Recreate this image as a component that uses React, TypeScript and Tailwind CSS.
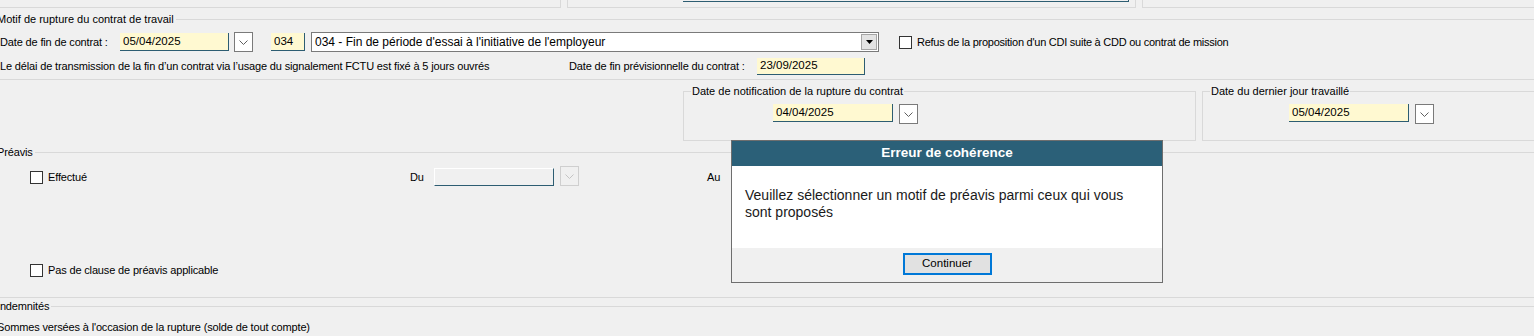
import React from "react";

const Chevron = ({ color = "#5f5f5f" }: { color?: string }) => (
  <svg width="9" height="5" viewBox="0 0 9 5">
    <polyline points="0.5,0.5 4.5,4.5 8.5,0.5" fill="none" stroke={color} strokeWidth="1" />
  </svg>
);

const DateBtn = ({ disabled = false }: { disabled?: boolean }) => (
  <div
    className={
      disabled
        ? "w-[19px] h-[20px] border border-[#cfcfcf] bg-[#f0f0f0] flex items-center justify-center shrink-0"
        : "w-[19px] h-[20px] border border-[#7a7a7a] bg-white flex items-center justify-center shrink-0"
    }
  >
    <Chevron color={disabled ? "#c4c4c4" : "#5f5f5f"} />
  </div>
);

const YInput = ({ w, value }: { w: string; value: string }) => (
  <div className={`${w} h-[18px] shrink-0 bg-[#fff9d1] border-b border-r border-[#2d5d72] flex items-center pl-[3px] text-[11.5px] tracking-normal text-black`}>
    {value}
  </div>
);

const Check = () => <div className="w-[13px] h-[13px] border border-[#333] bg-white shrink-0" />;

const LegendLine = ({ text, className = "" }: { text: string; className?: string }) => (
  <div className={`flex items-center h-[12px] ${className}`}>
    <span className="ml-[-3px] pr-[2px] leading-[12px] whitespace-nowrap">{text}</span>
    <div className="flex-1 h-px bg-[#d9d9d9]" />
  </div>
);

export default function App() {
  return (
    <div
      className="relative w-[1534px] h-[336px] overflow-hidden bg-[#f0f0f0] text-[11px] tracking-[-0.15px] text-black whitespace-nowrap"
      style={{ fontFamily: '"Liberation Sans", Arial, sans-serif' }}
    >
      {/* Top cut-off boxes */}
      <div className="flex h-[8px] gap-[6px]">
        <div className="w-[561px] shrink-0 border-b border-r border-[#d9d9d9]" />
        <div className="w-[569px] shrink-0 border-b border-x border-[#d9d9d9] pl-[115px]">
          <div className="w-[446px] h-[2px] border-b border-r border-[#2d5d72]" />
        </div>
        <div className="flex-1 border-b border-l border-[#d9d9d9]" />
      </div>

      {/* Motif de rupture */}
      <LegendLine text="Motif de rupture du contrat de travail" className="mt-[5px] tracking-normal" />
      <div className="flex items-center h-[24px] mt-[5px]">
        <span className="w-[120px] shrink-0">Date de fin de contrat :</span>
        <YInput w="w-[109px]" value="05/04/2025" />
        <div className="ml-[5px]">
          <DateBtn />
        </div>
        <div className="ml-[18px]">
          <YInput w="w-[34px]" value="034" />
        </div>
        <div className="ml-[6px] w-[568px] shrink-0 h-[20px] border border-[#7a7a7a] bg-white flex items-center">
          <span className="flex-1 pl-[3px] text-[12px] tracking-normal">034 - Fin de période d'essai à l'initiative de l'employeur</span>
          <div className="w-[16px] h-[16px] mr-[1px] bg-[#e3e3e3] border border-[#a5a5a5] flex items-center justify-center">
            <svg width="7" height="4" viewBox="0 0 7 4">
              <polygon points="0,0 7,0 3.5,4" fill="#000" />
            </svg>
          </div>
        </div>
        <div className="ml-[20px]">
          <Check />
        </div>
        <span className="ml-[5px] tracking-[-0.25px]">Refus de la proposition d'un CDI suite à CDD ou contrat de mission</span>
      </div>
      <div className="flex items-center h-[25px]">
        <span className="w-[569px] shrink-0">Le délai de transmission de la fin d’un contrat via l’usage du signalement FCTU est fixé à 5 jours ouvrés</span>
        <span className="w-[188px] shrink-0">Date de fin prévisionnelle du contrat :</span>
        <div className="h-[17px] w-[108px] shrink-0 bg-[#fff9d1] border-b border-r border-[#2d5d72] flex items-center pl-[3px] text-[11.5px] tracking-normal">23/09/2025</div>
      </div>
      <div className="h-px bg-[#d9d9d9]" />

      {/* Notification / dernier jour boxes */}
      <div className="flex gap-[6px] ml-[683px] mt-[5px]">
        <fieldset className="w-[513px] shrink-0 h-[56px] border border-[#d9d9d9] px-0">
          <legend className="ml-[7px] px-[1px] leading-[12px] tracking-normal">Date de notification de la rupture du contrat</legend>
          <div className="flex items-start gap-[6px] pl-[89px] pt-[7px]">
            <YInput w="w-[120px]" value="04/04/2025" />
            <DateBtn />
          </div>
        </fieldset>
        <fieldset className="w-[360px] shrink-0 h-[56px] border border-[#d9d9d9] px-0">
          <legend className="ml-[7px] px-[1px] leading-[12px] tracking-normal">Date du dernier jour travaillé</legend>
          <div className="flex items-start gap-[6px] pl-[86px] pt-[7px]">
            <YInput w="w-[120px]" value="05/04/2025" />
            <DateBtn />
          </div>
        </fieldset>
      </div>

      {/* Préavis */}
      <LegendLine text="Préavis" className="mt-[5px]" />
      <div className="flex items-center h-[24px] mt-[7px]">
        <div className="w-[410px] shrink-0 flex items-center pl-[30px]">
          <Check />
          <span className="ml-[5px]">Effectué</span>
        </div>
        <span className="w-[24px] shrink-0">Du</span>
        <div className="w-[120px] shrink-0 h-[18px] bg-[#f0f0f0] border-t border-l border-white border-b border-r border-b-[#2d5d72] border-r-[#2d5d72]" />
        <div className="ml-[6px] mb-[2px]">
          <DateBtn disabled />
        </div>
        <span className="ml-[128px]">Au</span>
      </div>
      <div className="flex items-center h-[24px] mt-[69px] pl-[30px]">
        <Check />
        <span className="ml-[5px]">Pas de clause de préavis applicable</span>
      </div>
      <div className="h-px bg-[#d9d9d9] mt-[15px]" />

      {/* Indemnités */}
      <LegendLine text="Indemnités" className="mt-[2px]" />
      <div className="flex items-center h-[16px] mt-[7px]">
        <span className="ml-[-3px]">Sommes versées à l'occasion de la rupture (solde de tout compte)</span>
      </div>

      {/* Dialog overlay */}
      <div className="absolute left-[731px] top-[140px] w-[432px] h-[143px] border border-[#6e6e6e] bg-white flex flex-col tracking-normal whitespace-normal">
        <div className="h-[25px] bg-[#2b6078] flex items-center justify-center text-white font-bold text-[13.5px]">
          Erreur de cohérence
        </div>
        <div className="h-[82px] bg-white pt-[21px] pl-[13px] pr-[14px] text-[14px] leading-[17px] text-[#1a1a1a]">
          Veuillez sélectionner un motif de préavis parmi ceux qui vous sont proposés
        </div>
        <div className="flex-1 bg-[#f0f0f0] flex justify-center pt-[5px]">
          <div className="w-[89px] h-[22px] border-2 border-[#0078d7] bg-[#e1e1e1] flex items-center justify-center text-[11.5px]">
            Continuer
          </div>
        </div>
      </div>
    </div>
  );
}
